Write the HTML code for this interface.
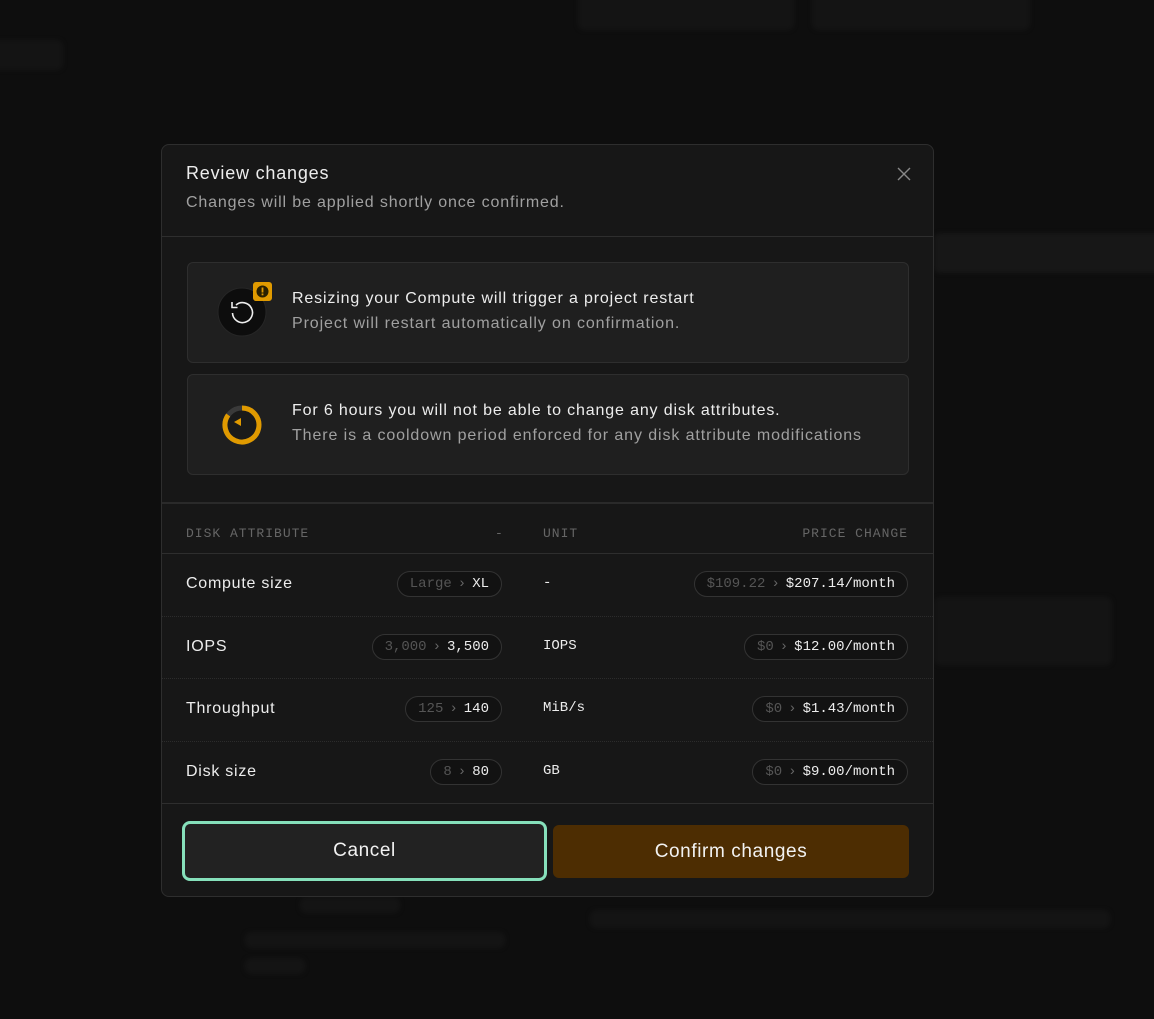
<!DOCTYPE html>
<html><head><meta charset="utf-8"><style>
*{box-sizing:border-box;margin:0;padding:0}
body{width:1154px;height:1019px;background:#0e0e0e;font-family:"Liberation Sans",sans-serif;position:relative;overflow:hidden;color:#ededed}
.bg{position:absolute;background:#141414;border-radius:6px;filter:blur(2px)}
.modal{position:absolute;left:161px;top:144px;width:773px;height:753px;background:#171717;border:1px solid #2e2e2e;border-radius:8px;overflow:hidden}
.t{position:absolute;left:24px;top:18px;font-size:18px;letter-spacing:0.8px;color:#ededed}
.st{position:absolute;left:24px;top:49px;font-size:16px;letter-spacing:0.85px;color:#a0a0a0}
.x{position:absolute;right:22px;top:22px}
.hl{position:absolute;left:0;right:0;height:1px;background:#2e2e2e}
.co{position:absolute;left:25px;width:722px;height:101px;background:#1f1f1f;border:1px solid #2e2e2e;border-radius:6px}
.co .a{position:absolute;left:104px;top:27px;font-size:16px;letter-spacing:0.85px;color:#ededed}
.co .b{position:absolute;left:104px;top:52px;font-size:16px;letter-spacing:0.9px;color:#a0a0a0}
.th{position:absolute;top:381px;font-family:"Liberation Mono",monospace;font-size:13px;color:#666;letter-spacing:1px}
.row{position:absolute;left:0;right:0;height:62px;border-top:1px dotted #2c2c2c}
.lab{position:absolute;left:24px;top:21px;font-size:16px;letter-spacing:0.75px;color:#ededed}
.unit{position:absolute;left:381px;top:21px;font-family:"Liberation Mono",monospace;font-size:14px;color:#ededed}
.pill{position:absolute;top:17px;height:26px;border:1px solid #333;background:#121212;border-radius:13px;padding:0 12px;font-family:"Liberation Mono",monospace;font-size:14px;line-height:24px;color:#ededed;white-space:nowrap}
.pill .o{color:#555}
.pill .g{color:#666;margin:0 6px}
.btn{position:absolute;top:680px;height:53px;border-radius:6px;font-size:19px;letter-spacing:0.6px;display:flex;align-items:center;justify-content:center;color:#f2f2f2}
</style></head><body>
<div class="bg" style="left:578px;top:-10px;width:216px;height:40px"></div>
<div class="bg" style="left:812px;top:-10px;width:218px;height:40px"></div>
<div class="bg" style="left:-10px;top:40px;width:73px;height:30px"></div>
<div class="bg" style="left:934px;top:233px;width:230px;height:40px;background:#171717"></div>
<div class="bg" style="left:934px;top:597px;width:178px;height:68px"></div>
<div class="bg" style="left:590px;top:910px;width:520px;height:18px"></div>
<div class="bg" style="left:245px;top:932px;width:260px;height:16px"></div>
<div class="bg" style="left:245px;top:958px;width:60px;height:16px"></div>
<div class="bg" style="left:300px;top:897px;width:100px;height:16px"></div>
<div class="modal">
<div class="t">Review changes</div>
<div class="st">Changes will be applied shortly once confirmed.</div>
<svg class="x" width="14" height="14" viewBox="0 0 14 14"><path d="M1 1L13 13M13 1L1 13" stroke="#888" stroke-width="1.4"/></svg>
<div class="hl" style="top:91px"></div>
<div class="co" style="top:117px">
<svg style="position:absolute;left:28px;top:17px" width="58" height="58" viewBox="0 0 58 58">
<circle cx="26" cy="32" r="24" fill="#0d0d0d" stroke="#262626"/>
<path d="M20 25 A10 10 0 1 1 16.5 33" fill="none" stroke="#eee" stroke-width="1.6"/>
<path d="M16 22 L16 27.5 L21.5 27.5" fill="none" stroke="#eee" stroke-width="1.6"/>
<rect x="37" y="2" width="19" height="19" rx="3" fill="#e09a00"/>
<circle cx="46.5" cy="11.5" r="6" fill="#2a2000"/>
<rect x="45.6" y="7.5" width="1.8" height="5" fill="#e09a00"/><rect x="45.6" y="13.5" width="1.8" height="1.8" fill="#e09a00"/>
</svg>
<div class="a">Resizing your Compute will trigger a project restart</div>
<div class="b">Project will restart automatically on confirmation.</div>
</div>
<div class="co" style="top:229px">
<svg style="position:absolute;left:31px;top:27px" width="46" height="46" viewBox="0 0 46 46">
<circle cx="23" cy="23" r="17" fill="#1a1a1a" stroke="#3a3a3a" stroke-width="5"/>
<path d="M23 6 A17 17 0 1 1 9.2 13" fill="none" stroke="#e09a00" stroke-width="5"/>
<path d="M15 20 L22 16 L22 24 Z" fill="#e09a00"/>
</svg>
<div class="a">For 6 hours you will not be able to change any disk attributes.</div>
<div class="b">There is a cooldown period enforced for any disk attribute modifications</div>
</div>
<div class="hl" style="top:357px;height:2px;background:#2a2a2a"></div>
<div class="th" style="left:24px">DISK ATTRIBUTE</div>
<div class="th" style="left:333px">-</div>
<div class="th" style="left:381px">UNIT</div>
<div class="th" style="right:25px">PRICE CHANGE</div>
<div class="row" style="top:408px;border-top:1px solid #2e2e2e">
<div class="lab">Compute size</div><div class="pill" style="right:431px"><span class="o">Large</span><span class="g">›</span>XL</div>
<div class="unit">-</div><div class="pill" style="right:25px"><span class="o">$109.22</span><span class="g">›</span>$207.14/month</div></div>
<div class="row" style="top:471px">
<div class="lab">IOPS</div><div class="pill" style="right:431px"><span class="o">3,000</span><span class="g">›</span>3,500</div>
<div class="unit">IOPS</div><div class="pill" style="right:25px"><span class="o">$0</span><span class="g">›</span>$12.00/month</div></div>
<div class="row" style="top:533px">
<div class="lab">Throughput</div><div class="pill" style="right:431px"><span class="o">125</span><span class="g">›</span>140</div>
<div class="unit">MiB/s</div><div class="pill" style="right:25px"><span class="o">$0</span><span class="g">›</span>$1.43/month</div></div>
<div class="row" style="top:596px">
<div class="lab">Disk size</div><div class="pill" style="right:431px"><span class="o">8</span><span class="g">›</span>80</div>
<div class="unit">GB</div><div class="pill" style="right:25px"><span class="o">$0</span><span class="g">›</span>$9.00/month</div></div>
<div class="hl" style="top:658px"></div>
<div class="btn" style="left:20px;width:365px;top:676px;height:60px;background:#222;border:3px solid #86e0bb;border-radius:8px">Cancel</div>
<div class="btn" style="left:391px;width:356px;background:#4d2d02">Confirm changes</div>
</div>
</body></html>
